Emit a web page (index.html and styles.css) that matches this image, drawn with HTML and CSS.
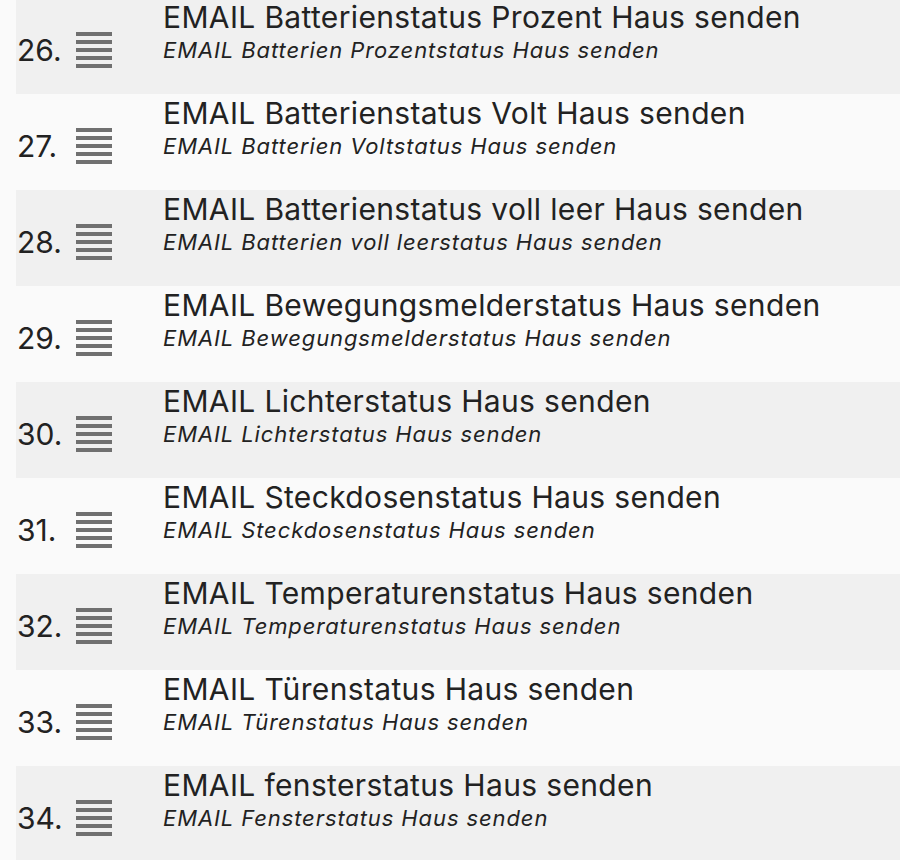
FILE: index.html
```html
<!DOCTYPE html>
<html lang="de">

<head>
    <meta charset="UTF-8">
    <meta name="viewport" content="width=device-width, initial-scale=1.0">
    <title>Szenen</title>
    <link rel="stylesheet" href="styles.css">
</head>

<body>
    <ol class="scene-list">
        <li class="scene">
            <span class="num">26.</span>
            <span class="grip"></span>
            <div class="text">
                <div class="title">EMAIL Batterienstatus Prozent Haus senden</div>
                <div class="sub">EMAIL Batterien Prozentstatus Haus senden</div>
            </div>
        </li>
        <li class="scene">
            <span class="num">27.</span>
            <span class="grip"></span>
            <div class="text">
                <div class="title">EMAIL Batterienstatus Volt Haus senden</div>
                <div class="sub">EMAIL Batterien Voltstatus Haus senden</div>
            </div>
        </li>
        <li class="scene">
            <span class="num">28.</span>
            <span class="grip"></span>
            <div class="text">
                <div class="title">EMAIL Batterienstatus voll leer Haus senden</div>
                <div class="sub">EMAIL Batterien voll leerstatus Haus senden</div>
            </div>
        </li>
        <li class="scene">
            <span class="num">29.</span>
            <span class="grip"></span>
            <div class="text">
                <div class="title">EMAIL Bewegungsmelderstatus Haus senden</div>
                <div class="sub">EMAIL Bewegungsmelderstatus Haus senden</div>
            </div>
        </li>
        <li class="scene">
            <span class="num">30.</span>
            <span class="grip"></span>
            <div class="text">
                <div class="title">EMAIL Lichterstatus Haus senden</div>
                <div class="sub">EMAIL Lichterstatus Haus senden</div>
            </div>
        </li>
        <li class="scene">
            <span class="num">31.</span>
            <span class="grip"></span>
            <div class="text">
                <div class="title">EMAIL Steckdosenstatus Haus senden</div>
                <div class="sub">EMAIL Steckdosenstatus Haus senden</div>
            </div>
        </li>
        <li class="scene">
            <span class="num">32.</span>
            <span class="grip"></span>
            <div class="text">
                <div class="title">EMAIL Temperaturenstatus Haus senden</div>
                <div class="sub">EMAIL Temperaturenstatus Haus senden</div>
            </div>
        </li>
        <li class="scene">
            <span class="num">33.</span>
            <span class="grip"></span>
            <div class="text">
                <div class="title">EMAIL Türenstatus Haus senden</div>
                <div class="sub">EMAIL Türenstatus Haus senden</div>
            </div>
        </li>
        <li class="scene">
            <span class="num">34.</span>
            <span class="grip"></span>
            <div class="text">
                <div class="title">EMAIL fensterstatus Haus senden</div>
                <div class="sub">EMAIL Fensterstatus Haus senden</div>
            </div>
        </li>
    </ol>
</body>
</html>
```

FILE: styles.css
```css
body {
    font-family: Inter, "Noto Sans", sans-serif;
    background-color: #fafafa;
    color: #222222;
    margin: 0;
    padding: 0;
}

.scene-list {
    list-style: none;
    margin: -2px 0 0 16px;
    padding: 0;
}

.scene {
    display: flex;
    align-items: flex-start;
    height: 96px;
}

.scene:nth-child(odd) {
    background-color: #f0f0f0;
}

.num {
    width: 59px;
    padding-left: 1px;
    margin-top: 34px;
    font-size: 30px;
    line-height: 36px;
}

.grip {
    width: 36px;
    height: 36px;
    margin-top: 34px;
    background: repeating-linear-gradient(#707070 0 4px, transparent 4px 8px);
}

.text {
    margin-left: 51px;
    padding-top: 1px;
}

.title {
    font-size: 30px;
    line-height: 36px;
    letter-spacing: 0.35px;
}

.sub {
    margin-top: 2px;
    font-size: 22px;
    line-height: 26px;
    font-style: italic;
    letter-spacing: 0.9px;
}
```
